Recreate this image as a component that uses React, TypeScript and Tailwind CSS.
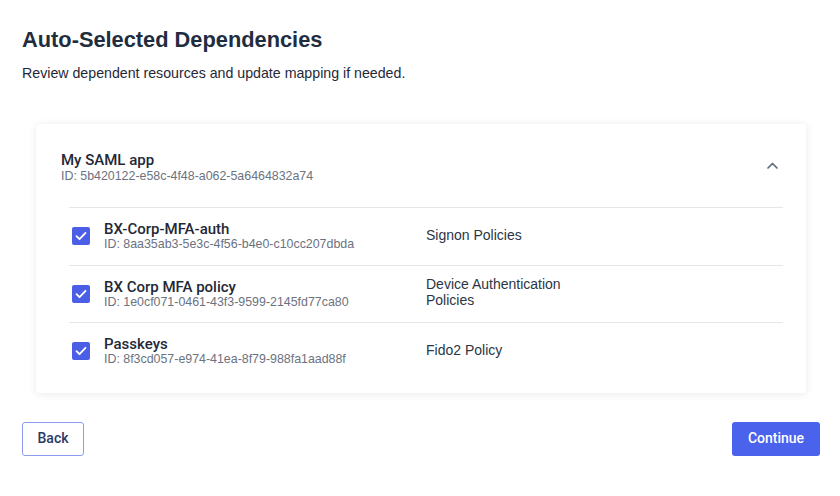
import React from "react";

const dependencies = [
  { name: "BX-Corp-MFA-auth", id: "8aa35ab3-5e3c-4f56-b4e0-c10cc207dbda", type: "Signon Policies" },
  { name: "BX Corp MFA policy", id: "1e0cf071-0461-43f3-9599-2145fd77ca80", type: "Device Authentication Policies" },
  { name: "Passkeys", id: "8f3cd057-e974-41ea-8f79-988fa1aad88f", type: "Fido2 Policy" },
];

const CheckBox: React.FC = () => (
  <span className="flex h-[18px] w-[18px] shrink-0 items-center justify-center rounded-[2px] bg-[#4b5fe6]">
    <svg width="12" height="10" viewBox="0 0 12 10" fill="none">
      <path d="M1.5 5.2l3 3 6-6.4" stroke="#fff" strokeWidth="1.8" strokeLinecap="round" strokeLinejoin="round" />
    </svg>
  </span>
);

const App: React.FC = () => {
  return (
    <div className="min-h-[496px] bg-white pl-[22px] pr-5 pt-[26px] font-['Liberation_Sans',Arial,sans-serif]">
      <h1 className="text-[21.8px] font-bold leading-7 text-[#1f2d3f]">Auto-Selected Dependencies</h1>
      <p className="mt-[9px] text-[14.2px] leading-5 text-[#1f2937]">
        Review dependent resources and update mapping if needed.
      </p>

      <div className="mx-[14px] mt-[41px] rounded-[4px] bg-white pb-[13px] shadow-[0_1px_8px_rgba(0,0,0,0.09)]">
        <div className="flex items-center justify-between pb-[24px] pl-[25px] pr-[28px] pt-[27px]">
          <div>
            <div className="font-['Roboto',sans-serif] text-[15px] font-medium leading-[18px] text-[#1f2937]">My SAML app</div>
            <div className="text-[12.4px] leading-[14px] text-[#6b7280]">ID: 5b420122-e58c-4f48-a062-5a6464832a74</div>
          </div>
          <svg width="11" height="7" viewBox="0 0 11 7" fill="none" className="-mt-[4px]">
            <path d="M1 6l4.5-4.5L10 6" stroke="#5b6a7e" strokeWidth="1.7" strokeLinecap="round" strokeLinejoin="round" />
          </svg>
        </div>

        <div className="ml-[33px] mr-[23px]">
          {dependencies.map((dep) => (
            <div key={dep.id} className="flex h-[57.5px] items-center border-t border-[#e3e6ea] pl-[3px]">
              <CheckBox />
              <div className="ml-[14px] w-[322px] shrink-0">
                <div className="font-['Roboto',sans-serif] text-[15px] font-medium leading-[16px] text-[#1f2937]">{dep.name}</div>
                <div className="text-[12.4px] leading-[14px] text-[#6b7280]">ID: {dep.id}</div>
              </div>
              <div className="-mt-[3px] w-[160px] text-[14px] leading-4 text-[#2b3645]">{dep.type}</div>
            </div>
          ))}
        </div>
      </div>

      <div className="mt-[29px] flex items-center justify-between">
        <button className="h-[34px] w-[62px] rounded-[3px] border border-[#8d9cf2] bg-white font-['Roboto',sans-serif] text-[14px] font-medium text-[#2c3a66]">
          Back
        </button>
        <button className="h-[34px] w-[88px] rounded-[3px] bg-[#4a62ec] font-['Roboto',sans-serif] text-[14px] font-medium text-white">
          Continue
        </button>
      </div>
    </div>
  );
};

export default App;
